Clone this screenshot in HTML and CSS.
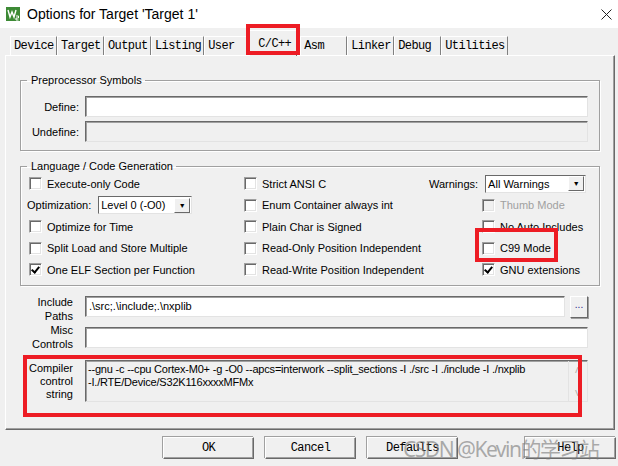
FILE: index.html
```html
<!DOCTYPE html>
<html lang="en">
<head>
    <meta charset="UTF-8">
    <title>Options for Target 'Target 1'</title>
    <link rel="stylesheet" href="styles.css">
</head>
<body>

    <div class="titlebar">
        <svg class="app-icon" width="14" height="14" viewBox="0 0 14 14">
            <rect width="14" height="14" fill="#3d8a35"/>
            <path d="M2 3 L4 10 L6 5 L8 10 L10 3" stroke="#fff" stroke-width="1.4" fill="none"/>
            <path d="M10 9 h2.5 v2 h-2.5 v2 h2.5" stroke="#fff" stroke-width="1" fill="none"/>
        </svg>
        <div class="title">Options for Target 'Target 1'</div>
        <svg class="close" width="11" height="11" viewBox="0 0 11 11">
            <path d="M0.5 0.5 L10.5 10.5 M10.5 0.5 L0.5 10.5" stroke="#222" stroke-width="1"/>
        </svg>
    </div>

    <div class="tabs">
        <div class="tab">Device</div>
        <div class="tab">Target</div>
        <div class="tab">Output</div>
        <div class="tab">Listing</div>
        <div class="tab">User</div>
        <div class="tab active">C/C++</div>
        <div class="tab">Asm</div>
        <div class="tab">Linker</div>
        <div class="tab">Debug</div>
        <div class="tab">Utilities</div>
    </div>

    <div class="panel">
        <fieldset class="group">
            <legend>Preprocessor Symbols</legend>
            <div class="symbols">
                <label>Define:</label>
                <div class="field"></div>
                <label>Undefine:</label>
                <div class="field disabled"></div>
            </div>
        </fieldset>

        <fieldset class="group">
            <legend>Language / Code Generation</legend>
            <div class="options">
                <div class="check"><span class="cb"></span>Execute-only Code</div>
                <div class="check"><span class="cb"></span>Strict ANSI C</div>
                <div class="combo-row">
                    <span class="combo-label">Warnings:</span>
                    <div class="combo wide"><span>All Warnings</span><span class="drop">&#9660;</span></div>
                </div>

                <div class="combo-row">
                    <span class="combo-label">Optimization:</span>
                    <div class="combo"><span>Level 0 (-O0)</span><span class="drop">&#9660;</span></div>
                </div>
                <div class="check"><span class="cb"></span>Enum Container always int</div>
                <div class="check right grey"><span class="cb"></span>Thumb Mode</div>

                <div class="check"><span class="cb"></span>Optimize for Time</div>
                <div class="check"><span class="cb"></span>Plain Char is Signed</div>
                <div class="check right"><span class="cb"></span>No Auto Includes</div>

                <div class="check"><span class="cb"></span>Split Load and Store Multiple</div>
                <div class="check"><span class="cb"></span>Read-Only Position Independent</div>
                <div class="check right marked"><span class="cb"></span>C99 Mode</div>

                <div class="check"><span class="cb on"></span>One ELF Section per Function</div>
                <div class="check"><span class="cb"></span>Read-Write Position Independent</div>
                <div class="check right"><span class="cb on"></span>GNU extensions</div>
            </div>
        </fieldset>

        <div class="controls">
            <label class="include-label">Include<br>Paths</label>
            <div class="path-row">
                <div class="field">.\src;.\include;.\nxplib</div>
                <button class="browse">...</button>
            </div>

            <label>Misc<br>Controls</label>
            <div class="field misc"></div>

            <label class="compiler-label">Compiler<br>control<br>string</label>
            <div class="field disabled compiler">
                <div class="compiler-text">--gnu -c --cpu Cortex-M0+ -g -O0 --apcs=interwork --split_sections -I ./src -I ./include -I ./nxplib<br>-I./RTE/Device/S32K116xxxxMFMx</div>
                <div class="scroll"><span>&#708;</span><span>&#709;</span></div>
            </div>
            <div class="marker compiler-marker"></div>
        </div>
    </div>

    <div class="buttons">
        <button class="btn">OK</button>
        <button class="btn">Cancel</button>
        <button class="btn">Defaults</button>
        <button class="btn help">Help</button>
    </div>

    <div class="watermark">CSDN @Kevin的学习站</div>

</body>
</html>
```

FILE: styles.css
```css
body {
    font-family: "Liberation Sans", Arial, sans-serif;
    font-size: 11px;
    margin: 0;
    padding: 0;
    width: 618px;
    height: 466px;
    overflow: hidden;
    background-color: #f0f0f0;
    color: #000;
    position: relative;
}

.titlebar {
    height: 28px;
    background-color: #fff;
    display: flex;
    align-items: center;
    padding-left: 6px;
}

.title {
    margin-left: 7px;
    font-size: 14px;
    color: #000;
}

.close {
    margin-left: auto;
    margin-right: 6px;
}

.tabs {
    height: 27px;
    display: flex;
    align-items: flex-end;
    padding-left: 10px;
    font-family: "Liberation Mono", "Courier New", monospace;
    font-size: 12px;
    letter-spacing: -0.6px;
}

.tab {
    box-sizing: border-box;
    height: 19px;
    min-width: 47px;
    padding: 1px 2px 0 3px;
    line-height: 17px;
    border-top: 1px solid #fff;
    border-left: 1px solid #fff;
    border-right: 1px solid #808080;
    position: relative;
}

.tab.active {
    height: 26px;
    min-width: 48px;
    margin: 0 3px -1px -2px;
    padding: 4px 2px 0 8px;
    line-height: 18px;
    border-right-color: #696969;
    background-color: #f0f0f0;
    z-index: 2;
}

.tab.active::after {
    content: "";
    position: absolute;
    left: -4px;
    top: -7px;
    width: 46px;
    height: 23px;
    border: 4px solid #ed1c24;
}

.panel {
    box-sizing: border-box;
    margin: 0 3px 0 5px;
    height: 375px;
    border-top: 1px solid #fff;
    border-left: 1px solid #fff;
    border-right: 1px solid #696969;
    border-bottom: 1px solid #696969;
    box-shadow: inset -1px -1px 0 #a0a0a0;
    padding: 17px 14px 0 14px;
    position: relative;
}

.group {
    margin: 0 0 8px 0;
    padding: 9px 11px 8px 0;
    border: 1px solid #a0a0a0;
    box-shadow: 1px 1px 0 #fff, inset 1px 1px 0 #fff;
}

.group + .group {
    padding-top: 0;
}

.group legend {
    margin-left: 6px;
    padding: 0 3px 0 4px;
    line-height: 14px;
}

.symbols {
    display: grid;
    grid-template-columns: 58px 1fr;
    column-gap: 6px;
    row-gap: 4px;
    align-items: center;
}

.symbols label {
    text-align: right;
}

.field {
    height: 19px;
    background-color: #fff;
    border: 1px solid;
    border-color: #696969 #e3e3e3 #e3e3e3 #696969;
    box-shadow: inset 1px 1px 0 #a0a0a0;
    line-height: 19px;
    padding-left: 3px;
    box-sizing: content-box;
}

.field.disabled {
    background-color: #f0f0f0;
}

.options {
    display: grid;
    grid-template-columns: 215px 187px 1fr;
    grid-auto-rows: 21.5px;
    align-items: center;
    padding: 0 0 0 6px;
    margin-bottom: -4px;
    white-space: nowrap;
}

.check {
    display: flex;
    align-items: center;
    padding-left: 2px;
    position: relative;
}

.check.right {
    padding-left: 53px;
}

.check.grey {
    color: #a0a0a0;
}

.cb {
    flex: none;
    width: 11px;
    height: 11px;
    background-color: #fff;
    border: 1px solid;
    border-color: #a0a0a0 #fff #fff #a0a0a0;
    box-shadow: inset 1px 1px 0 #696969, inset -1px -1px 0 #e3e3e3;
    margin-right: 5px;
    position: relative;
}

.grey .cb {
    background-color: #f0f0f0;
}

.cb.on::after {
    content: "";
    position: absolute;
    left: 3px;
    top: 1px;
    width: 3px;
    height: 6px;
    border-right: 2px solid #000;
    border-bottom: 2px solid #000;
    transform: rotate(40deg);
}

.check.marked::after {
    content: "";
    position: absolute;
    left: 46px;
    top: -14px;
    width: 75px;
    height: 26px;
    border: 4px solid #ed1c24;
}

.combo-row {
    display: flex;
    align-items: center;
}

.combo-label {
    margin-right: 7px;
}

.combo {
    width: 90px;
    height: 16px;
    background-color: #fff;
    border: 1px solid;
    border-color: #696969 #e3e3e3 #e3e3e3 #696969;
    display: flex;
    align-items: center;
    justify-content: space-between;
    padding-left: 2px;
}

.combo.wide {
    width: 97px;
}

.drop {
    width: 16px;
    height: 15px;
    margin-right: 1px;
    background-color: #f0f0f0;
    border: 1px solid;
    border-color: #fff #696969 #696969 #fff;
    font-size: 7px;
    line-height: 13px;
    text-align: center;
    box-sizing: border-box;
}

.controls {
    display: grid;
    grid-template-columns: 53px 1fr;
    column-gap: 12px;
    margin-right: 12px;
    margin-top: 5px;
    position: relative;
}

.controls label {
    text-align: right;
    line-height: 14px;
}

.controls .include-label {
    padding-top: 1px;
}

.path-row {
    display: flex;
    align-items: flex-start;
    margin-top: 2px;
}

.path-row .field {
    flex: 1;
}

.browse {
    width: 18px;
    height: 22px;
    margin-left: 5px;
    padding: 0 0 4px 0;
    font-family: "Liberation Sans", Arial, sans-serif;
    font-size: 10px;
    color: #1c1c8c;
    background-color: #f0f0f0;
    border: 1px solid;
    border-color: #fff #696969 #696969 #fff;
    box-shadow: 1px 1px 0 #a0a0a0;
}

.field.misc {
    margin-top: 4px;
}

.compiler-label {
    margin-top: 10px;
    padding-top: 1px;
    line-height: 13px !important;
}

.field.compiler {
    margin-top: 9px;
    height: 40px;
    display: flex;
    padding-left: 2px;
    line-height: 13px;
}

.compiler-text {
    flex: 1;
    padding-top: 2px;
    letter-spacing: -0.2px;
}

.scroll {
    width: 18px;
    display: flex;
    flex-direction: column;
    justify-content: space-between;
    align-items: center;
    color: #b0b0b0;
    font-size: 12px;
    border-left: 1px solid #e3e3e3;
    padding: 4px 0 0 0;
}

.compiler-marker {
    position: absolute;
    left: 3px;
    top: 61px;
    width: 551px;
    height: 54px;
    border: 4px solid #ed1c24;
}

.buttons {
    display: flex;
    padding-top: 7px;
}

.btn {
    width: 91px;
    height: 22px;
    margin-left: 11px;
    font-family: "Liberation Mono", "Courier New", monospace;
    font-size: 12px;
    letter-spacing: -0.6px;
    background-color: #f0f0f0;
    border: 1px solid;
    border-color: #fff #696969 #696969 #fff;
    box-shadow: inset -1px -1px 0 #a0a0a0, -1px -1px 0 #a0a0a0;
    padding: 0;
}

.btn:first-child {
    margin-left: 163px;
}

.btn.help {
    margin-left: 67px;
}

.watermark {
    position: absolute;
    left: 403px;
    top: 433px;
    font-family: "Noto Sans", "Noto Sans CJK SC", sans-serif;
    font-size: 21px;
    letter-spacing: -1.5px;
    color: rgba(120, 120, 120, 0.6);
    white-space: nowrap;
}
```
